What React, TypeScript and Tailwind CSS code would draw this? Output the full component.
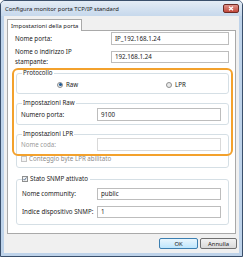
import React from "react";

function Input({ value, disabled, className = "" }: { value?: string; disabled?: boolean; className?: string }) {
  return (
    <div
      className={`flex items-center bg-white border ${
        disabled ? "border-[#d9d9d9]" : "border-[#bdbdbd]"
      } pl-[3px] text-[#1a1a1a] ${className}`}
    >
      {value}
    </div>
  );
}

function Radio({ checked, label }: { checked?: boolean; label: string }) {
  return (
    <div className="flex items-center gap-[3px]">
      <div className="w-[6px] h-[6px] rounded-full border border-[#8e8f8f] bg-[#eaeaea] flex items-center justify-center">
        {checked && <div className="w-[3px] h-[3px] rounded-full bg-[#1f5a96]" />}
      </div>
      <span>{label}</span>
    </div>
  );
}

function Check({ checked, label, disabled }: { checked?: boolean; label: string; disabled?: boolean }) {
  return (
    <div className={`flex items-center gap-[2px] ${disabled ? "text-[#8c8c8c]" : "text-[#1a1a1a]"}`}>
      <div
        className={`w-[6px] h-[6px] border ${
          disabled ? "border-[#c4c4c4] bg-[#f4f4f4]" : "border-[#8e8f8f] bg-[#f2f2f2]"
        } flex items-center justify-center`}
      >
        {checked && (
          <svg width="6" height="6" viewBox="0 0 6 6">
            <path d="M0.8 3.1 L2.3 4.7 L5.3 0.6" fill="none" stroke="#2b4d76" strokeWidth="1.1" />
          </svg>
        )}
      </div>
      <span>{label}</span>
    </div>
  );
}

export default function App() {
  return (
    <div className="w-[243px] h-[257px] relative bg-[#bed3ea] border border-[#3a4f6b] rounded-t-[5px] flex flex-col font-['Noto_Sans',sans-serif] text-[6.2px] leading-[8px] text-[#1a1a1a] overflow-hidden">
      {/* Title bar */}
      <div className="h-[15px] flex items-start justify-between pl-[4px] pr-[3px] bg-gradient-to-b from-[#e4ecf5] to-[#c6d8ec]">
        <span className="mt-[4px] text-[5.9px] text-[#1a1a1a]">Configura monitor porta TCP/IP standard</span>
        <div className="mt-[3px] w-[16px] h-[9px] rounded-[2px] border border-[#6d2a24] bg-gradient-to-b from-[#e0928a] to-[#c1463a] flex items-center justify-center">
          <svg width="6" height="5" viewBox="0 0 6 5">
            <path d="M1 0.8 L5 4.2 M5 0.8 L1 4.2" stroke="white" strokeWidth="1.3" />
          </svg>
        </div>
      </div>

      {/* Client area */}
      <div className="flex-1 mx-[3px] mb-[3px] bg-[#f0f0f0] px-[3px] pt-[3px] pb-[3px] flex flex-col">
        {/* Tab strip */}
        <div className="flex">
          <div className="relative z-10 h-[12px] px-[3px] border border-b-0 border-[#a9a9a9] bg-white flex items-center text-[5.9px]">
            Impostazioni della porta
          </div>
        </div>
        {/* Panel */}
        <div className="-mt-px h-[204px] border border-[#a9a9a9] bg-white pl-[7px] pr-[6px] pt-[1px] flex flex-col">
          <div className="flex items-center h-[13px]">
            <span className="w-[96px]">Nome porta:</span>
            <Input value="IP_192.168.1.24" className="flex-1 h-[13px]" />
          </div>
          <div className="flex items-start h-[20px] mt-[2px]">
            <span className="w-[96px] leading-[10px]">
              Nome o indirizzo IP
              <br />
              stampante:
            </span>
            <Input value="192.168.1.24" className="flex-1 h-[12px] mt-[4px]" />
          </div>

          {/* Protocollo */}
          <fieldset className="ml-[1px] mt-[2px] border border-[#d5dfe5] rounded-[3px] px-[4px] h-[25px]">
            <legend className="ml-[1px] px-[1px] leading-[8px]">Protocollo</legend>
            <div className="flex items-center h-[15px] pl-[36px]">
              <div className="w-[109px]">
                <Radio checked label="Raw" />
              </div>
              <Radio label="LPR" />
            </div>
          </fieldset>

          {/* Impostazioni Raw */}
          <fieldset className="ml-[1px] mt-[5px] border border-[#d5dfe5] rounded-[3px] pl-[4px] pr-[7px] h-[26px]">
            <legend className="ml-[1px] px-[1px] leading-[8px]">Impostazioni Raw</legend>
            <div className="flex items-center mt-[1px]">
              <span className="w-[76px]">Numero porta:</span>
              <Input value="9100" className="flex-1 h-[13px]" />
            </div>
          </fieldset>

          {/* Impostazioni LPR */}
          <fieldset className="ml-[1px] mt-[5px] border border-[#d5dfe5] rounded-[3px] pl-[4px] pr-[7px] h-[38px]">
            <legend className="ml-[1px] px-[1px] leading-[8px]">Impostazioni LPR</legend>
            <div className="flex items-center">
              <span className="w-[76px] text-[#9a9a9a]">Nome coda:</span>
              <Input disabled className="flex-1 h-[13px]" />
            </div>
            <div className="mt-[4px]">
              <Check disabled label="Conteggio byte LPR abilitato" />
            </div>
          </fieldset>

          {/* SNMP */}
          <fieldset className="ml-[1px] mt-[7px] border border-[#d5dfe5] rounded-[3px] pl-[5px] pr-[7px] h-[50px]">
            <legend className="ml-[0px] pr-[2px] leading-[8px]">
              <Check checked label="Stato SNMP attivato" />
            </legend>
            <div className="flex items-center mt-[5px]">
              <span className="w-[75px]">Nome community:</span>
              <Input value="public" className="flex-1 h-[12px]" />
            </div>
            <div className="flex items-center mt-[6px]">
              <span className="w-[75px]">Indice dispositivo SNMP:</span>
              <Input value="1" className="flex-1 h-[12px]" />
            </div>
          </fieldset>
        </div>

        {/* Buttons */}
        <div className="flex justify-end gap-[2px] mt-[4px] -mr-px">
          <button className="w-[39px] h-[11px] rounded-[2px] border border-[#3c7fb1] bg-gradient-to-b from-[#eaf6fd] to-[#bee6fd] text-[5.9px] leading-[8px]">
            OK
          </button>
          <button className="w-[37px] h-[11px] rounded-[2px] border border-[#707070] bg-gradient-to-b from-[#f2f2f2] to-[#d9d9d9] text-[5.9px] leading-[8px]">
            Annulla
          </button>
        </div>
      </div>

      {/* Orange highlight annotation */}
      <div className="absolute left-[11px] top-[67px] w-[221px] h-[88px] border-2 border-[#f3a12c] rounded-[6px] pointer-events-none" />
    </div>
  );
}
